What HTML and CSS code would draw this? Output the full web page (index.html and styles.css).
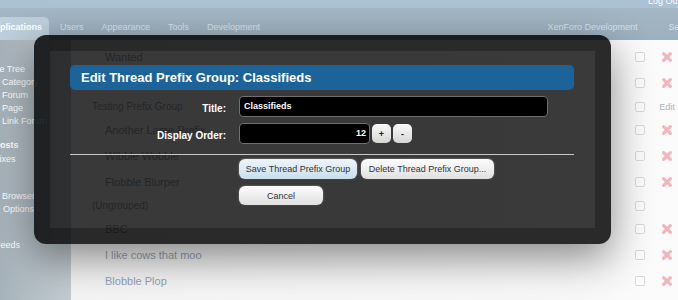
FILE: index.html
```html
<!DOCTYPE html>
<html>
<head>
<meta charset="utf-8">
<link rel="stylesheet" href="styles.css">
</head>
<body>
<header class="header">
  <div class="topbar"><span class="logout">Log Out</span></div>
  <div class="tabbar">
    <nav class="tabs tabs-left">
      <span class="tab active">Applications</span>
      <span class="tab">Users</span>
      <span class="tab">Appearance</span>
      <span class="tab">Tools</span>
      <span class="tab">Development</span>
    </nav>
    <nav class="tabs tabs-right">
      <span class="tab">XenForo Development</span>
      <span class="tab">Search</span>
    </nav>
  </div>
</header>
<div class="page">
  <aside class="sidebar">
    <div class="nav-sec nav-sec1">
      <div class="nav-item lvl0">Node Tree</div>
      <div class="nav-item lvl1">Category</div>
      <div class="nav-item lvl1">Forum</div>
      <div class="nav-item lvl1">Page</div>
      <div class="nav-item lvl1">Link Forum</div>
    </div>
    <div class="nav-sec nav-sec2">
      <div class="nav-item nav-head">Posts</div>
      <div class="nav-item lvl0">Prefixes</div>
    </div>
    <div class="nav-sec nav-sec3">
      <div class="nav-item lvl1">Browser</div>
      <div class="nav-item lvl1b">Options</div>
    </div>
    <div class="nav-sec nav-sec4">
      <div class="nav-item lvlf">Feeds</div>
    </div>
  </aside>
  <main class="content">
    <div class="row"><span class="row-title">Wanted</span><span class="check"></span><span class="action"><svg class="del" viewBox="0 0 12 12"><path d="M2.6 2.6L9.4 9.4M9.4 2.6L2.6 9.4"/></svg></span></div>
    <div class="row"><span class="row-title">For Sale</span><span class="check"></span><span class="action"><svg class="del" viewBox="0 0 12 12"><path d="M2.6 2.6L9.4 9.4M9.4 2.6L2.6 9.4"/></svg></span></div>
    <div class="row group"><span class="row-title">Testing Prefix Group</span><span class="check"></span><span class="action">Edit</span></div>
    <div class="row"><span class="row-title">Another Lame Prefix</span><span class="check"></span><span class="action"><svg class="del" viewBox="0 0 12 12"><path d="M2.6 2.6L9.4 9.4M9.4 2.6L2.6 9.4"/></svg></span></div>
    <div class="row"><span class="row-title">Wibble Wobble</span><span class="check"></span><span class="action"><svg class="del" viewBox="0 0 12 12"><path d="M2.6 2.6L9.4 9.4M9.4 2.6L2.6 9.4"/></svg></span></div>
    <div class="row"><span class="row-title">Flobble Blurper</span><span class="check"></span><span class="action"><svg class="del" viewBox="0 0 12 12"><path d="M2.6 2.6L9.4 9.4M9.4 2.6L2.6 9.4"/></svg></span></div>
    <div class="row group"><span class="row-title">(Ungrouped)</span><span class="check"></span><span class="action"></span></div>
    <div class="row"><span class="row-title">BBC</span><span class="check"></span><span class="action"><svg class="del" viewBox="0 0 12 12"><path d="M2.6 2.6L9.4 9.4M9.4 2.6L2.6 9.4"/></svg></span></div>
    <div class="row"><span class="row-title">I like cows that moo</span><span class="check"></span><span class="action"><svg class="del" viewBox="0 0 12 12"><path d="M2.6 2.6L9.4 9.4M9.4 2.6L2.6 9.4"/></svg></span></div>
    <div class="row"><span class="row-title">Blobble Plop</span><span class="check"></span><span class="action"><svg class="del" viewBox="0 0 12 12"><path d="M2.6 2.6L9.4 9.4M9.4 2.6L2.6 9.4"/></svg></span></div>
  </main>
</div>

<div class="overlay">
  <div class="title-bar">Edit Thread Prefix Group: Classifieds</div>
  <div class="form">
    <div class="form-row">
      <div class="label">Title:</div>
      <div class="field field-title">Classifieds</div>
    </div>
    <div class="form-row">
      <div class="label">Display Order:</div>
      <div class="field field-order">12</div>
      <div class="spin">+</div>
      <div class="spin">-</div>
    </div>
    <div class="divider"></div>
    <div class="actions">
      <div class="btn-row">
        <div class="btn btn-primary">Save Thread Prefix Group</div>
        <div class="btn btn-delete">Delete Thread Prefix Group...</div>
      </div>
      <div class="btn btn-cancel">Cancel</div>
    </div>
  </div>
</div>
</body>
</html>
```
FILE: styles.css
```css
* { box-sizing: border-box; }

body {
  margin: 0;
  width: 678px;
  height: 300px;
  overflow: hidden;
  position: relative;
  font-family: "Liberation Sans", Arial, sans-serif;
  background: #f8f8f8;
}

/* header */
.topbar {
  height: 8px;
  background: #abc2d5;
  display: flex;
  justify-content: flex-end;
  overflow: hidden;
}
.logout {
  font-size: 9px;
  line-height: 10px;
  color: #fff;
  margin-top: -4px;
  margin-right: -2px;
  white-space: nowrap;
}
.tabbar {
  height: 32px;
  background: linear-gradient(#a4b7c5, #9cafbd);
  display: flex;
  justify-content: space-between;
  align-items: flex-end;
  overflow: hidden;
}
.tabs { display: flex; align-items: flex-end; }
.tabs-left { margin-left: -20px; }
.tabs-right { margin-right: -28px; gap: 13px; }
.tab {
  height: 23px;
  padding: 4px 9px 0;
  font-size: 9px;
  line-height: 12px;
  color: #d6e1e9;
  white-space: nowrap;
}
.tab.active {
  background: #bdcfdc;
  color: #fff;
  font-weight: bold;
  padding: 4px 7px 0 8px;
  border-radius: 0 5px 0 0;
  margin-right: 2px;
}

/* page */
.page { display: flex; height: 260px; }
.sidebar {
  width: 71px;
  flex: none;
  background: linear-gradient(to right, #a6b2ba, #c3ccd2);
  overflow: hidden;
  color: #fff;
  font-size: 9px;
}
.nav-sec { margin-left: -20px; }
.nav-sec1 { padding-top: 23px; }
.nav-sec2 { margin-top: 10px; }
.nav-sec2 .nav-item { line-height: 14px; }
.nav-sec3 { margin-top: 24px; }
.nav-sec4 { margin-top: 23px; }
.nav-item { line-height: 13px; white-space: nowrap; }
.lvl0 { padding-left: 3px; }
.lvl1 { padding-left: 22px; }
.lvl1b { padding-left: 23px; }
.lvlf { padding-left: 15px; }
.nav-head { padding-left: 14px; font-weight: bold; }

.content {
  flex: 1;
  padding-top: 4px;
  background: linear-gradient(to right, #f4f4f4, #f8f8f8 80%, #fbfbfb);
}
.row {
  display: flex;
  align-items: center;
  height: 26px;
  padding-left: 34px;
  padding-right: 2px;
}
.row.group { height: 21px; padding-left: 21px; }
.row-title {
  flex: 1;
  font-size: 11px;
  color: #93a2b5;
  white-space: nowrap;
}
.group .row-title { font-size: 10px; color: #9aa5ae; }
.check {
  width: 10px;
  height: 10px;
  border: 1px solid #d6dadd;
  border-radius: 2px;
  background: #fcfcfc;
  margin-right: 13px;
}
.action {
  width: 18px;
  display: flex;
  justify-content: center;
  font-size: 9px;
  color: #adb5bc;
}
.del { width: 12px; height: 12px; }
.del path {
  stroke: #f5b4ba;
  stroke-width: 3.2;
  stroke-linecap: round;
  fill: none;
}

/* overlay */
.overlay {
  position: absolute;
  left: 34px;
  top: 35px;
  width: 577px;
  height: 209px;
  border: 16px solid rgba(0, 0, 0, 0.83);
  background: rgba(0, 0, 0, 0.77);
  background-clip: padding-box;
  border-radius: 12px;
  box-shadow: 0 14px 40px rgba(0, 0, 0, 0.45);
  padding: 14px 21px 0 20px;
}
.title-bar {
  height: 25px;
  background: #1c6399;
  border-radius: 5px;
  color: #fff;
  font-weight: bold;
  font-size: 13px;
  line-height: 25px;
  padding-left: 11px;
  white-space: nowrap;
}
.form { margin-top: 6px; }
.form-row { display: flex; align-items: flex-start; }
.form-row + .form-row { margin-top: 6px; }
.label {
  width: 156px;
  margin-right: 13px;
  text-align: right;
  color: #fff;
  font-weight: bold;
  font-size: 10px;
  line-height: 13px;
  padding-top: 6px;
}
.field {
  height: 21px;
  background: #000;
  border: 1px solid #707070;
  border-radius: 4px;
  color: #fff;
  font-weight: bold;
  font-size: 9px;
  line-height: 19px;
  padding: 0 4px;
  white-space: nowrap;
}
.field-title { width: 309px; }
.field-order { width: 131px; text-align: right; padding-right: 3px; }
.spin {
  width: 19px;
  height: 19px;
  margin-left: 2px;
  margin-top: 1px;
  border-radius: 5px;
  background: linear-gradient(#fafafa, #d6d6d6);
  color: #222;
  font-weight: bold;
  font-size: 9px;
  display: flex;
  align-items: center;
  justify-content: center;
}
.divider { margin-top: 10px; border-top: 1px solid #c9c9c9; }
.actions { margin-left: 169px; margin-top: 4px; }
.btn-row { display: flex; gap: 4px; }
.btn {
  height: 20px;
  border-radius: 6px;
  background: linear-gradient(#fdfdfd, #e0e0e0);
  color: #333;
  font-size: 9px;
  display: flex;
  align-items: center;
  justify-content: center;
  white-space: nowrap;
  box-shadow: 0 0 2px rgba(255, 255, 255, 0.5), 0 1px 1px rgba(0, 0, 0, 0.4);
}
.btn-primary { width: 118px; background: linear-gradient(#eef5fa, #c8deed); }
.btn-delete { width: 133px; }
.btn-cancel { width: 84px; height: 19px; margin-top: 7px; }
```
